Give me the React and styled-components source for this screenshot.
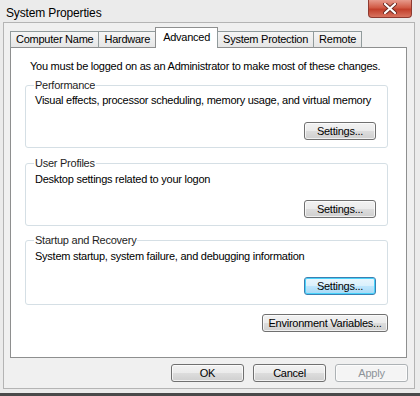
import React from 'react'
import styled, { createGlobalStyle } from 'styled-components';

const GlobalStyle = createGlobalStyle`
    html, body{margin: 0; padding: 0; background: #ececec}
    *{box-sizing: border-box}
`;

const Window = styled.div`
    width: 420px; height: 396px; background: #ebebeb; display: flex; flex-direction: column;
    font-family: "Liberation Sans", Arial, sans-serif; font-size: 11px; color: #000; letter-spacing: -0.25px;
    border-bottom: 3px solid #4a4a4a; overflow: hidden; white-space: nowrap;
`;

const TitleBar = styled.div`
    height: 22px; display: flex; align-items: flex-start; justify-content: space-between; padding-left: 6px;
    .title{font-size: 12px; line-height: 12px; margin-top: 7px; letter-spacing: -0.15px}
`;

const CloseBtn = styled.div`
    width: 44px; height: 18px; margin-right: 8px; border: 1px solid #8e3a30; border-top: none; border-radius: 0 0 4px 4px;
    background: linear-gradient(#e79a8c, #d15a45 45%, #c23f2b 55%, #d8735f); display: flex; align-items: center; justify-content: center;
`;

const Client = styled.div`
    flex: 1; margin: 0 5px 4px 3px; border: 1px solid #b4b4b4; background: #f0f0f0;
    display: flex; flex-direction: column; padding: 4px 7px 0 6px;
`;

const TabStrip = styled.div`
    display: flex; align-items: flex-end; height: 21px; padding-left: 1px; position: relative; z-index: 1;
`;

const Tab = styled.div`
    height: ${p => p.$active ? '21px' : '17px'}; padding: 0 ${p => p.$pad}px; line-height: 15px;
    border: 1px solid ${p => p.$active ? '#8e8f8f' : '#919b9c'}; border-bottom: ${p => p.$active ? 'none' : '1px solid #8e8f8f'};
    background: ${p => p.$active ? '#fff' : 'linear-gradient(#f5f5f5, #e6e6e6)'};
    margin-left: -1px; padding-top: ${p => p.$active ? '2px' : '0'};
`;

const Panel = styled.div`
    height: 311px; margin-top: -1px; width: 397px; background: #fff; border: 1px solid #8e8f8f;
    padding: 11px 18px 0 14px; display: flex; flex-direction: column;
`;

const Notice = styled.div`
    line-height: 14px; padding-left: 5px; margin-bottom: 5px;
`;

const Group = styled.fieldset`
    margin: ${p => p.$mt}px 0 0 0; border: 1px solid #d5dfe5; border-radius: 3px; padding: 0 11px ${p => p.$pb}px 8px; min-width: 0;
    legend{padding: 0 1px; line-height: 14px; color: #1e1e1e}
`;

const Desc = styled.div`
    line-height: 14px; margin-top: ${p => p.$top}px; padding-left: 1px; margin-bottom: ${p => p.$below}px;
`;

const Row = styled.div`
    display: flex; justify-content: flex-end; gap: 9px; margin-top: ${p => p.$mt || 0}px;
`;

const Button = styled.div`
    width: ${p => p.$w}px; height: 18px; border: 1px solid ${p => p.$focus ? '#3c7fb1' : p.$off ? '#adb2b5' : '#707070'}; border-radius: 3px;
    background: ${p => p.$off ? '#f4f4f4' : p.$focus ? 'linear-gradient(#eaf6fd, #d9f0fc 50%, #bee6fd 51%, #a7d9f5)' : 'linear-gradient(#f2f2f2, #ebebeb 50%, #dddddd 51%, #cfcfcf)'};
    box-shadow: ${p => p.$focus ? 'inset 0 0 0 1px #48d3fb' : 'inset 0 0 0 1px rgba(255,255,255,0.7)'};
    color: ${p => p.$off ? '#8d9398' : '#000'}; display: flex; align-items: center; justify-content: center; line-height: 14px;
`;

const Footer = styled.div`
    display: flex; justify-content: flex-end; gap: 9px; padding: 6px 0 0 0; margin-right: -1px;
`;

const tabs = [
  { label: 'Computer Name', pad: 5 },
  { label: 'Hardware', pad: 5 },
  { label: 'Advanced', pad: 7, active: true },
  { label: 'System Protection', pad: 5 },
  { label: 'Remote', pad: 5 },
];

const groups = [
  { title: 'Performance', desc: 'Visual effects, processor scheduling, memory usage, and virtual memory', mt: 0, top: 1, below: 15, pb: 7 },
  { title: 'User Profiles', desc: 'Desktop settings related to your logon', mt: 8, top: 2, below: 14, pb: 7 },
  { title: 'Startup and Recovery', desc: 'System startup, system failure, and debugging information', mt: 7, top: 2, below: 14, pb: 9, focus: true },
];

function App() {
  return (
    <>
      <GlobalStyle />
      <Window>
        <TitleBar>
          <span className='title'>System Properties</span>
          <CloseBtn>
            <svg width="14" height="11" viewBox="0 0 14 11">
              <path d="M2 1 L12 10 M12 1 L2 10" stroke="#6b2a22" strokeWidth="4" strokeLinecap="round" />
              <path d="M2 1 L12 10 M12 1 L2 10" stroke="#fff" strokeWidth="2.2" strokeLinecap="round" />
            </svg>
          </CloseBtn>
        </TitleBar>
        <Client>
          <TabStrip>
            {tabs.map(t => <Tab key={t.label} $active={t.active} $pad={t.pad}>{t.label}</Tab>)}
          </TabStrip>
          <Panel>
            <Notice>You must be logged on as an Administrator to make most of these changes.</Notice>
            {groups.map(g => (
              <Group key={g.title} $mt={g.mt} $pb={g.pb}>
                <legend>{g.title}</legend>
                <Desc $top={g.top} $below={g.below}>{g.desc}</Desc>
                <Row><Button $w={72} $focus={g.focus}>Settings...</Button></Row>
              </Group>
            ))}
            <Row $mt={9}><Button $w={126}>Environment Variables...</Button></Row>
          </Panel>
          <Footer>
            <Button $w={73}>OK</Button>
            <Button $w={73}>Cancel</Button>
            <Button $w={73} $off>Apply</Button>
          </Footer>
        </Client>
      </Window>
    </>
  )
}

export default App;
